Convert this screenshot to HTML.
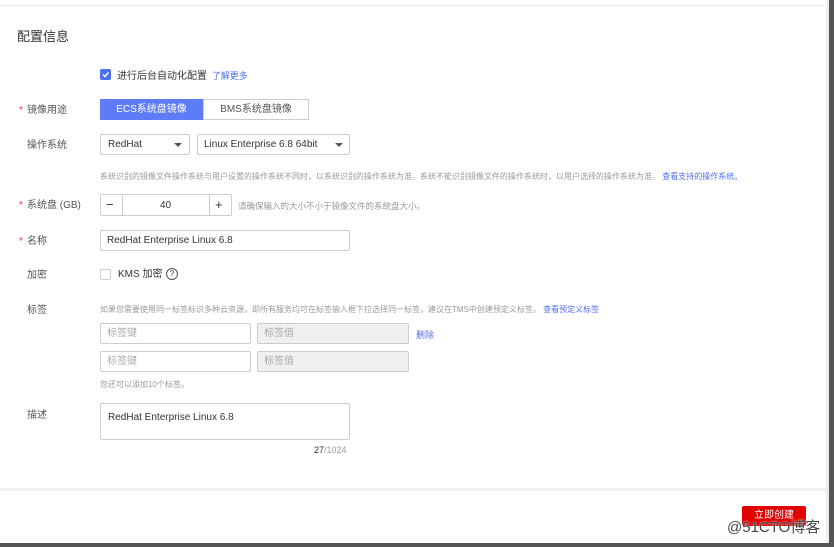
<!DOCTYPE html>
<html><head><meta charset="utf-8"><style>
*{box-sizing:border-box;margin:0;padding:0}
body{width:834px;height:547px;background:#fff;position:relative;overflow:hidden;font-family:"Liberation Sans","Noto Sans CJK SC",sans-serif;color:#333;font-size:10px;line-height:12px}
.a{position:absolute;white-space:nowrap}
.lbl{position:absolute;left:27px;font-size:10px;color:#555;line-height:12px}
.star{color:#e33;position:absolute;left:-8px;top:0;font-size:10px;line-height:12px}
.box{position:absolute;border:1px solid #ccc;background:#fff;border-radius:2px;display:flex;align-items:center;white-space:nowrap;padding-top:1px}
.ph{color:#aaa;font-size:10px}
.hint{color:#999;font-size:8px}
.link{color:#4f6ef7}
.caret{position:absolute;width:0;height:0;border-left:4px solid transparent;border-right:4px solid transparent;border-top:4px solid #555}
</style></head><body>
<div class="a" style="left:0;top:5px;width:826px;height:1px;background:#e8e8e8"></div>
<div class="a" style="left:826px;top:0;width:3px;height:547px;background:#eee"></div>
<div class="a" style="left:829px;top:0;width:5px;height:547px;background:#555"></div>
<div class="a" style="left:0;top:543px;width:834px;height:4px;background:#555"></div>
<div class="a" style="left:0;top:488px;width:826px;height:3px;background:#f0f0f0"></div>

<div class="a" style="left:17px;top:29px;font-size:13px;line-height:16px;color:#333">配置信息</div>

<div class="a" style="left:100px;top:69px;width:11px;height:11px;background:#4f6ef7;border-radius:2px"></div>
<svg class="a" style="left:101px;top:70px" width="9" height="9"><path d="M2 4.5 L4 6.5 L7.5 2.5" stroke="#fff" stroke-width="1.5" fill="none"/></svg>
<div class="a" style="left:117px;top:70px;font-size:10px">进行后台自动化配置 <span class="link" style="font-size:9px;margin-left:2px">了解更多</span></div>

<div class="lbl" style="top:105px"><span class="star">*</span>镜像用途</div>
<div class="box" style="left:100px;top:99px;width:103px;height:21px;background:#5e7cf7;border-color:#5e7cf7;color:#fff;justify-content:center;border-radius:0">ECS系统盘镜像</div>
<div class="box" style="left:203px;top:99px;width:106px;height:21px;border-radius:0;justify-content:center;color:#555">BMS系统盘镜像</div>

<div class="lbl" style="top:140px">操作系统</div>
<div class="box" style="left:100px;top:134px;width:90px;height:21px;padding-left:7px">RedHat</div>
<div class="caret" style="left:174px;top:143px"></div>
<div class="box" style="left:197px;top:134px;width:153px;height:21px;padding-left:6px">Linux Enterprise 6.8 64bit</div>
<div class="caret" style="left:335px;top:143px"></div>

<div class="a hint" style="left:100px;top:171px">系统识别的镜像文件操作系统与用户设置的操作系统不同时，以系统识别的操作系统为准。系统不能识别镜像文件的操作系统时，以用户选择的操作系统为准。 <span class="link">查看支持的操作系统。</span></div>

<div class="lbl" style="top:200px"><span class="star">*</span>系统盘 (GB)</div>
<div class="box" style="left:100px;top:194px;width:132px;height:22px"></div>
<div class="a" style="left:122px;top:195px;width:1px;height:20px;background:#ccc"></div>
<div class="a" style="left:209px;top:195px;width:1px;height:20px;background:#ccc"></div>
<div class="a" style="left:106px;top:197px;font-size:13px;line-height:16px">−</div>
<div class="a" style="left:215px;top:197px;font-size:13px;line-height:16px">+</div>
<div class="a" style="left:160px;top:200px">40</div>
<div class="a hint" style="left:238px;top:200px;font-size:8.5px">请确保输入的大小不小于镜像文件的系统盘大小。</div>

<div class="lbl" style="top:236px"><span class="star">*</span>名称</div>
<div class="box" style="left:100px;top:230px;width:250px;height:21px;padding-left:6px">RedHat Enterprise Linux 6.8</div>

<div class="lbl" style="top:270px">加密</div>
<div class="box" style="left:100px;top:269px;width:11px;height:11px"></div>
<div class="a" style="left:118px;top:269px">KMS 加密</div>
<div class="a" style="left:166px;top:268px;width:12px;height:12px;border:1px solid #555;border-radius:50%;font-size:8px;text-align:center;line-height:10px">?</div>

<div class="lbl" style="top:305px">标签</div>
<div class="a hint" style="left:100px;top:304px">如果您需要使用同一标签标识多种云资源，即所有服务均可在标签输入框下拉选择同一标签，建议在TMS中创建预定义标签。 <span class="link">查看预定义标签</span></div>
<div class="box ph" style="left:100px;top:323px;width:151px;height:21px;padding-left:6px">标签键</div>
<div class="box ph" style="left:257px;top:323px;width:152px;height:21px;padding-left:6px;background:#f0f0f0">标签值</div>
<div class="a link" style="left:416px;top:329px;font-size:9px">删除</div>
<div class="box ph" style="left:100px;top:351px;width:151px;height:21px;padding-left:6px">标签键</div>
<div class="box ph" style="left:257px;top:351px;width:152px;height:21px;padding-left:6px;background:#f0f0f0">标签值</div>
<div class="a hint" style="left:100px;top:379px">您还可以添加10个标签。</div>

<div class="lbl" style="top:410px">描述</div>
<div class="box" style="left:100px;top:403px;width:250px;height:37px;padding:8px 0 0 7px;align-items:flex-start">RedHat Enterprise Linux 6.8</div>
<div class="a" style="left:314px;top:444px;font-size:9px;color:#999"><span style="color:#333">27</span>/1024</div>

<div class="a" style="left:742px;top:506px;width:64px;height:20px;background:#e30000;color:#fff;text-align:center;line-height:20px;border-radius:2px">立即创建</div>
<div class="a" style="left:727px;top:519px;font-size:15px;line-height:18px;color:#444;text-shadow:0 0 2px #fff">@51CTO博客</div>
</body></html>
